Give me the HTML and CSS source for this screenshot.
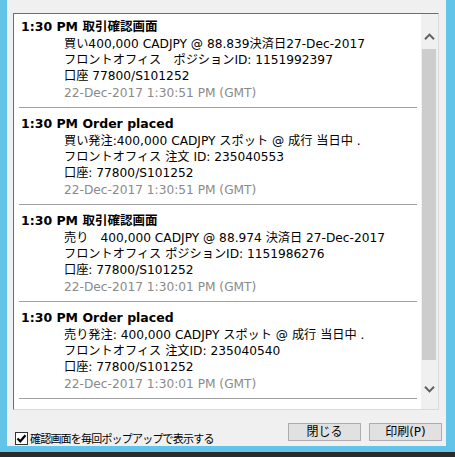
FILE: index.html
```html
<!DOCTYPE html>
<html lang="ja">
<head>
    <meta charset="UTF-8">
    <meta name="viewport" content="width=device-width, initial-scale=1.0">
    <title>取引確認画面</title>
    <link rel="stylesheet" href="styles.css">
</head>
<body>
    <div class="dialog">
        <div class="listbox">
            <div class="entries">
                <div class="entry first">
                    <div class="entry-title">1:30 PM 取引確認画面</div>
                    <div class="entry-body">
                        <div>買い400,000 CADJPY @ 88.839決済日27-Dec-2017</div>
                        <div>フロントオフィス　ポジションID: 1151992397</div>
                        <div>口座 77800/S101252</div>
                        <div class="entry-time">22-Dec-2017 1:30:51 PM (GMT)</div>
                    </div>
                </div>
                <div class="entry">
                    <div class="entry-title">1:30 PM Order placed</div>
                    <div class="entry-body">
                        <div>買い発注:400,000 CADJPY スポット @ 成行 当日中 .</div>
                        <div>フロントオフィス 注文 ID: 235040553</div>
                        <div>口座: 77800/S101252</div>
                        <div class="entry-time">22-Dec-2017 1:30:51 PM (GMT)</div>
                    </div>
                </div>
                <div class="entry">
                    <div class="entry-title">1:30 PM 取引確認画面</div>
                    <div class="entry-body">
                        <div>売り　400,000 CADJPY @ 88.974 決済日 27-Dec-2017</div>
                        <div>フロントオフィス ポジションID: 1151986276</div>
                        <div>口座: 77800/S101252</div>
                        <div class="entry-time">22-Dec-2017 1:30:01 PM (GMT)</div>
                    </div>
                </div>
                <div class="entry">
                    <div class="entry-title">1:30 PM Order placed</div>
                    <div class="entry-body">
                        <div>売り発注: 400,000 CADJPY スポット @ 成行 当日中 .</div>
                        <div>フロントオフィス 注文ID: 235040540</div>
                        <div>口座: 77800/S101252</div>
                        <div class="entry-time">22-Dec-2017 1:30:01 PM (GMT)</div>
                    </div>
                </div>
            </div>
            <div class="scrollbar">
                <div class="scroll-btn up">
                    <svg width="11" height="7" viewBox="0 0 11 7"><polyline points="1,6.2 5.5,1.6 10,6.2" fill="none" stroke="#606060" stroke-width="2"/></svg>
                </div>
                <div class="scroll-thumb"></div>
                <div class="scroll-track"></div>
                <div class="scroll-btn down">
                    <svg width="11" height="7" viewBox="0 0 11 7"><polyline points="1,0.8 5.5,5.4 10,0.8" fill="none" stroke="#606060" stroke-width="2"/></svg>
                </div>
            </div>
        </div>
        <div class="footer">
            <label class="check">
                <span class="check-box">
                    <svg width="11" height="11" viewBox="0 0 11 11"><polyline points="1.5,5.5 4.3,8.3 9.5,2.2" fill="none" stroke="#000" stroke-width="2.2"/></svg>
                </span>
                確認画面を毎回ポップアップで表示する
            </label>
            <div class="actions">
                <button>閉じる</button>
                <button>印刷(P)</button>
            </div>
        </div>
    </div>
    <div class="taskbar"></div>
</body>
</html>
```

FILE: styles.css
```css
body {
    margin: 0;
    height: 457px;
    overflow: hidden;
    background-color: #62c4e9;
    font-family: "DejaVu Sans", "Noto Sans CJK JP", sans-serif;
    color: #000;
}
.dialog {
    box-sizing: border-box;
    width: 439px;
    height: 446px;
    margin-left: 7px;
    padding: 13px 4px 0 6px;
    background-color: #f0f0f0;
}
.listbox {
    box-sizing: border-box;
    display: flex;
    width: 426px;
    height: 397px;
    border: 1px solid;
    border-color: #6d6d6d #dadada #dadada #6d6d6d;
    background-color: #fff;
}
.entries {
    flex: 1;
    overflow: hidden;
}
.entry {
    margin: 0 4px 0 5px;
    padding: 8px 0 6px;
    border-bottom: 1px solid #a0a0a0;
}
.entry.first {
    padding-top: 5px;
}
.entry-title {
    padding-left: 2px;
    font-weight: bold;
    font-size: 12.5px;
    line-height: 16px;
    white-space: nowrap;
}
.entry-body {
    margin-top: 1px;
    padding-left: 45px;
    font-size: 12.2px;
    line-height: 16px;
    white-space: nowrap;
}
.entry-time {
    margin-top: 1px;
    color: #8a8a8a;
}
.scrollbar {
    display: flex;
    flex-direction: column;
    width: 17px;
    background-color: #f0f0f0;
}
.scroll-btn {
    display: flex;
    justify-content: center;
}
.scroll-btn.up {
    height: 35px;
    align-items: flex-end;
    box-sizing: border-box;
    padding-bottom: 9px;
}
.scroll-btn.down {
    height: 34px;
    align-items: flex-start;
    box-sizing: border-box;
    padding-top: 11px;
}
.scroll-thumb {
    height: 311px;
    margin: 0 2px 0 1px;
    background-color: #cdcdcd;
}
.scroll-track {
    flex: 1;
}
.footer {
    display: flex;
    align-items: flex-start;
    margin-top: 13px;
}
.check {
    display: flex;
    align-items: center;
    margin: 8px 0 0 2px;
    font-family: "Noto Sans CJK JP", sans-serif;
    font-size: 11px;
    letter-spacing: -0.8px;
    line-height: 15px;
}
.check-box {
    box-sizing: border-box;
    display: flex;
    align-items: center;
    justify-content: center;
    width: 13px;
    height: 13px;
    margin-right: 2px;
    border: 1px solid #333;
    background-color: #fff;
}
.actions {
    display: flex;
    gap: 8px;
    margin-left: auto;
}
.actions button {
    box-sizing: border-box;
    width: 73px;
    height: 18px;
    padding: 0;
    border: 1px solid #adadad;
    background-color: #e1e1e1;
    font-family: "DejaVu Sans", "Noto Sans CJK JP", sans-serif;
    font-size: 12px;
    line-height: 16px;
    color: #000;
}
.taskbar {
    height: 5px;
    margin-top: 6px;
    background-color: #2b2b2b;
}
```
